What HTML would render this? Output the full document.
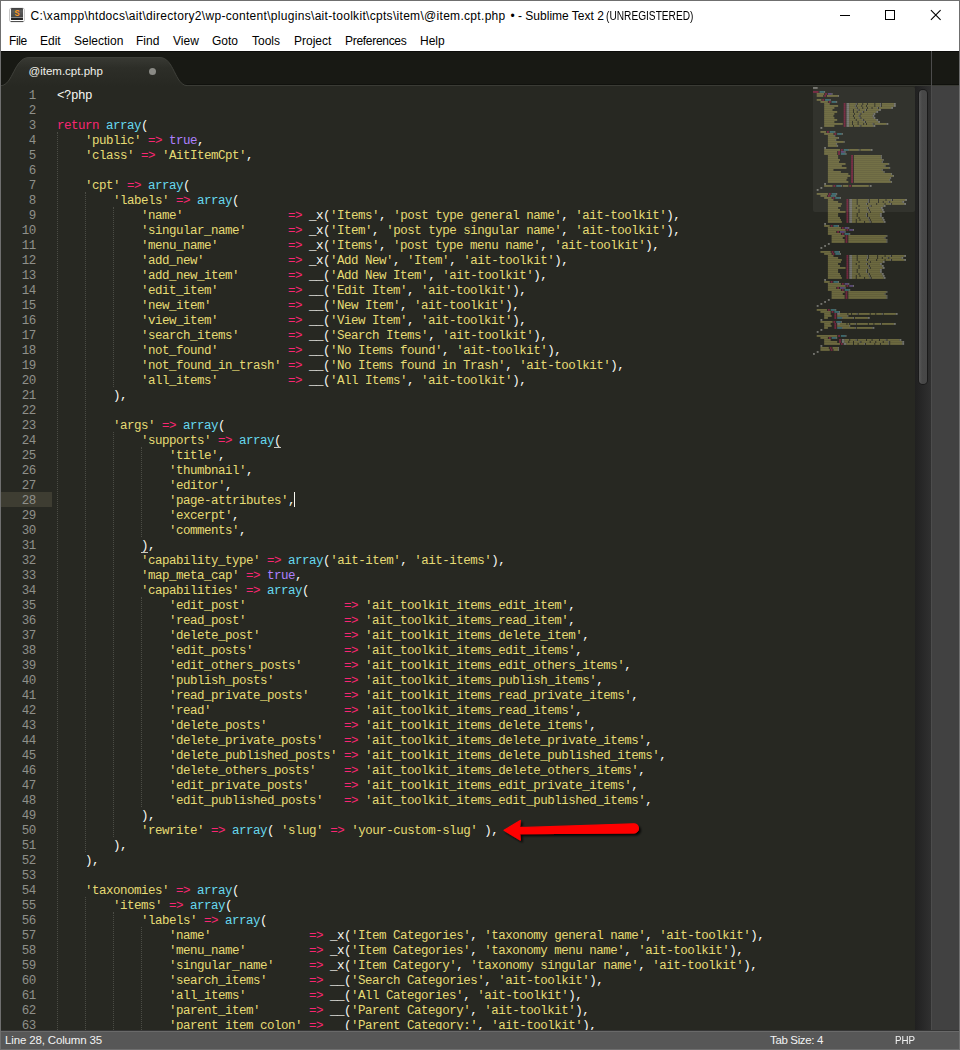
<!DOCTYPE html>
<html lang="en">
<head>
<meta charset="utf-8">
<title>@item.cpt.php - Sublime Text 2</title>
<style>
html,body{margin:0;padding:0;background:#272822;}
body{width:960px;height:1050px;overflow:hidden;position:relative;font-family:"Liberation Sans",sans-serif;}
#win{position:absolute;left:0;top:0;width:960px;height:1050px;overflow:hidden;background:#272822;}
.abs{position:absolute;}
#titlebar{left:1px;top:1px;width:958px;height:29px;background:#fff;}
#title{left:30px;top:9px;font-size:12px;line-height:15px;color:#000;white-space:pre;letter-spacing:0;}
#title span{position:absolute;top:0;white-space:pre}#ta{left:0.6px;letter-spacing:0.305px}#tb{left:480.5px}#tc{left:575.6px;transform:scaleX(0.846);transform-origin:0 0}
#menubar{left:1px;top:30px;width:958px;height:21px;background:#fff;}
#menubar span{position:absolute;top:4px;font-size:12px;line-height:15px;color:#000;white-space:nowrap;}
#tabbar{left:1px;top:51px;width:958px;height:35px;background:#181914;}
#editor{left:1px;top:86px;width:914px;height:945px;background:#272822;}
#nums{left:0;top:89px;width:35.75px;text-align:right;color:#8F908A;font-family:"Liberation Mono",monospace;font-size:12.5px;letter-spacing:-0.5px;line-height:15px;}
#nums div{height:15px;}
#code{left:57px;top:89px;color:#F8F8F2;font-family:"Liberation Mono",monospace;font-size:12.5px;letter-spacing:-0.5px;line-height:15px;}
.ln{height:15px;white-space:pre;}
.k{color:#F92672}.f{color:#66D9EF}.s{color:#E6DB74}.c{color:#AE81FF}
.g{position:absolute;width:0;border-left:1px dotted #4b4c45;display:block;}
#gut-hl{left:1px;top:492px;width:51px;height:15px;background:#3E3D32;}
#caret{left:294px;top:492px;width:1px;height:15px;background:#F8F8F0;}
.ul{height:1px;background:#c8c8c0;}
#track{left:915px;top:86px;width:16px;height:945px;background:linear-gradient(90deg,#202020,#303030);}
#thumb{left:919px;top:90px;width:8px;height:294px;border-radius:5px;background:linear-gradient(90deg,#585858,#484848 40%,#474747);box-shadow:0 0 0 1px #1a1a1a;}
#divider{left:931px;top:51px;width:1px;height:980px;background:#4c4c4c;}
#pane2{left:932px;top:86px;width:27px;height:945px;background:#414141;}
#mmview{left:813px;top:87px;width:102px;height:125px;background:#32332d;border-radius:2px;}
#status{left:1px;top:1030px;width:958px;height:19px;background:#575757;border-top:1px solid #353535;box-sizing:border-box;}
#status:before{content:"";position:absolute;left:0;top:0;width:100%;height:1px;background:#696969;}
#status span{position:absolute;top:2px;font-size:11.5px;line-height:15px;color:#f2f2f2;white-space:nowrap;}
.bd{background:#6f6f6f;}
</style>
</head>
<body>
<div id="win">
  <div id="titlebar" class="abs"></div>
  <svg class="abs" style="left:9px;top:7px" width="16" height="16" viewBox="0 0 16 16">
    <defs><linearGradient id="ig" x1="0" y1="0" x2="0" y2="1"><stop offset="0" stop-color="#3c3c3c"/><stop offset="0.25" stop-color="#5c5c5c"/><stop offset="1" stop-color="#3a3a3a"/></linearGradient></defs>
    <rect x="0.6" y="1.2" width="14.8" height="13.6" rx="1.6" fill="#fff" stroke="#a8a8a8" stroke-width="0.7"/>
    <rect x="1.6" y="14" width="12.8" height="1" rx="0.5" fill="#505050"/>
    <rect x="2" y="1" width="12" height="11.9" rx="0.8" fill="url(#ig)"/>
    <rect x="2" y="10.1" width="12" height="1" fill="#8e8e8e"/>
    <rect x="2" y="11.1" width="12" height="1.8" rx="0.4" fill="#222"/>
    <text x="0" y="9" transform="translate(8.1 0) scale(0.82 1)" font-family="Liberation Sans, sans-serif" font-weight="bold" font-size="9.4" text-anchor="middle" fill="#ff9a1e">S</text>
  </svg>
  <div id="title" class="abs"><span id="ta">C:\xampp\htdocs\ait\directory2\wp-content\plugins\ait-toolkit\cpts\item\@item.cpt.php</span><span id="tb">• - Sublime Text 2</span><span id="tc">(UNREGISTERED)</span></div>
  <svg class="abs" style="left:830px;top:1px" width="129" height="29" viewBox="0 0 129 29">
    <path d="M10 14.5H20" stroke="#000" stroke-width="1" fill="none"/>
    <rect x="55.5" y="9.5" width="9" height="9" stroke="#000" stroke-width="1" fill="none"/>
    <path d="M100.9 9.2L110.6 18.9M110.6 9.2L100.9 18.9" stroke="#000" stroke-width="1.1" fill="none"/>
  </svg>
  <div id="menubar" class="abs">
    <span style="left:8px;letter-spacing:-0.4px">File</span><span style="left:39px">Edit</span><span style="left:73px">Selection</span><span style="left:135px">Find</span><span style="left:172px">View</span><span style="left:211px">Goto</span><span style="left:251px">Tools</span><span style="left:293px">Project</span><span style="left:344px;letter-spacing:-0.3px">Preferences</span><span style="left:419px">Help</span>
  </div>
  <div id="tabbar" class="abs"></div>
  <svg class="abs" style="left:0;top:51px" width="960" height="36" viewBox="0 0 960 36">
    <defs><linearGradient id="tg" x1="0" y1="0" x2="0" y2="1"><stop offset="0" stop-color="#383933"/><stop offset="0.35" stop-color="#2d2e28"/><stop offset="1" stop-color="#272822"/></linearGradient></defs>
    <rect x="1" y="0" width="958" height="1" fill="#0c0c0a"/>
    <rect x="1" y="33" width="958" height="1" fill="#10110d"/>
    <rect x="1" y="34" width="958" height="1" fill="#3a3b35"/><rect x="1" y="35" width="958" height="1" fill="#272822"/>
    <path d="M1 34.5 C13 34.5 14 6.5 29 6.5 L160 6.5 C174 6.5 175 34.5 187 34.5 L186 36 L1 36 Z" fill="url(#tg)" stroke="#3f403a" stroke-width="1"/>
    <rect x="1" y="35" width="190" height="1" fill="#272822"/>
    <circle cx="152.5" cy="20.5" r="3.5" fill="#8a8a85"/>
    <text x="28.5" y="23.6" font-family="Liberation Sans, sans-serif" font-size="11.5" fill="#f0f0ea">@item.cpt.php</text>
  </svg>
  <div id="editor" class="abs"></div>
  <div id="gut-hl" class="abs"></div>
  <i class="g" style="left:57px;top:132px;height:900px"></i>
<i class="g" style="left:85px;top:192px;height:660px"></i>
<i class="g" style="left:85px;top:897px;height:135px"></i>
<i class="g" style="left:113px;top:207px;height:180px"></i>
<i class="g" style="left:113px;top:432px;height:405px"></i>
<i class="g" style="left:113px;top:912px;height:120px"></i>
<i class="g" style="left:141px;top:447px;height:90px"></i>
<i class="g" style="left:141px;top:597px;height:210px"></i>
<i class="g" style="left:141px;top:927px;height:105px"></i>
  <div id="nums" class="abs">
<div>1</div>
<div>2</div>
<div>3</div>
<div>4</div>
<div>5</div>
<div>6</div>
<div>7</div>
<div>8</div>
<div>9</div>
<div>10</div>
<div>11</div>
<div>12</div>
<div>13</div>
<div>14</div>
<div>15</div>
<div>16</div>
<div>17</div>
<div>18</div>
<div>19</div>
<div>20</div>
<div>21</div>
<div>22</div>
<div>23</div>
<div>24</div>
<div>25</div>
<div>26</div>
<div>27</div>
<div>28</div>
<div>29</div>
<div>30</div>
<div>31</div>
<div>32</div>
<div>33</div>
<div>34</div>
<div>35</div>
<div>36</div>
<div>37</div>
<div>38</div>
<div>39</div>
<div>40</div>
<div>41</div>
<div>42</div>
<div>43</div>
<div>44</div>
<div>45</div>
<div>46</div>
<div>47</div>
<div>48</div>
<div>49</div>
<div>50</div>
<div>51</div>
<div>52</div>
<div>53</div>
<div>54</div>
<div>55</div>
<div>56</div>
<div>57</div>
<div>58</div>
<div>59</div>
<div>60</div>
<div>61</div>
<div>62</div>
<div>63</div>
  </div>
  <div id="code" class="abs">
<div class="ln">&lt;?php</div>
<div class="ln"></div>
<div class="ln"><span class="k">return</span> <span class="f">array</span>(</div>
<div class="ln">    <span class="s">&#x27;public&#x27;</span> <span class="k">=&gt;</span> <span class="c">true</span>,</div>
<div class="ln">    <span class="s">&#x27;class&#x27;</span> <span class="k">=&gt;</span> <span class="s">&#x27;AitItemCpt&#x27;</span>,</div>
<div class="ln"></div>
<div class="ln">    <span class="s">&#x27;cpt&#x27;</span> <span class="k">=&gt;</span> <span class="f">array</span>(</div>
<div class="ln">        <span class="s">&#x27;labels&#x27;</span> <span class="k">=&gt;</span> <span class="f">array</span>(</div>
<div class="ln">            <span class="s">&#x27;name&#x27;</span>               <span class="k">=&gt;</span> _x(<span class="s">&#x27;Items&#x27;</span>, <span class="s">&#x27;post type general name&#x27;</span>, <span class="s">&#x27;ait-toolkit&#x27;</span>),</div>
<div class="ln">            <span class="s">&#x27;singular_name&#x27;</span>      <span class="k">=&gt;</span> _x(<span class="s">&#x27;Item&#x27;</span>, <span class="s">&#x27;post type singular name&#x27;</span>, <span class="s">&#x27;ait-toolkit&#x27;</span>),</div>
<div class="ln">            <span class="s">&#x27;menu_name&#x27;</span>          <span class="k">=&gt;</span> _x(<span class="s">&#x27;Items&#x27;</span>, <span class="s">&#x27;post type menu name&#x27;</span>, <span class="s">&#x27;ait-toolkit&#x27;</span>),</div>
<div class="ln">            <span class="s">&#x27;add_new&#x27;</span>            <span class="k">=&gt;</span> _x(<span class="s">&#x27;Add New&#x27;</span>, <span class="s">&#x27;Item&#x27;</span>, <span class="s">&#x27;ait-toolkit&#x27;</span>),</div>
<div class="ln">            <span class="s">&#x27;add_new_item&#x27;</span>       <span class="k">=&gt;</span> __(<span class="s">&#x27;Add New Item&#x27;</span>, <span class="s">&#x27;ait-toolkit&#x27;</span>),</div>
<div class="ln">            <span class="s">&#x27;edit_item&#x27;</span>          <span class="k">=&gt;</span> __(<span class="s">&#x27;Edit Item&#x27;</span>, <span class="s">&#x27;ait-toolkit&#x27;</span>),</div>
<div class="ln">            <span class="s">&#x27;new_item&#x27;</span>           <span class="k">=&gt;</span> __(<span class="s">&#x27;New Item&#x27;</span>, <span class="s">&#x27;ait-toolkit&#x27;</span>),</div>
<div class="ln">            <span class="s">&#x27;view_item&#x27;</span>          <span class="k">=&gt;</span> __(<span class="s">&#x27;View Item&#x27;</span>, <span class="s">&#x27;ait-toolkit&#x27;</span>),</div>
<div class="ln">            <span class="s">&#x27;search_items&#x27;</span>       <span class="k">=&gt;</span> __(<span class="s">&#x27;Search Items&#x27;</span>, <span class="s">&#x27;ait-toolkit&#x27;</span>),</div>
<div class="ln">            <span class="s">&#x27;not_found&#x27;</span>          <span class="k">=&gt;</span> __(<span class="s">&#x27;No Items found&#x27;</span>, <span class="s">&#x27;ait-toolkit&#x27;</span>),</div>
<div class="ln">            <span class="s">&#x27;not_found_in_trash&#x27;</span> <span class="k">=&gt;</span> __(<span class="s">&#x27;No Items found in Trash&#x27;</span>, <span class="s">&#x27;ait-toolkit&#x27;</span>),</div>
<div class="ln">            <span class="s">&#x27;all_items&#x27;</span>          <span class="k">=&gt;</span> __(<span class="s">&#x27;All Items&#x27;</span>, <span class="s">&#x27;ait-toolkit&#x27;</span>),</div>
<div class="ln">        ),</div>
<div class="ln"></div>
<div class="ln">        <span class="s">&#x27;args&#x27;</span> <span class="k">=&gt;</span> <span class="f">array</span>(</div>
<div class="ln">            <span class="s">&#x27;supports&#x27;</span> <span class="k">=&gt;</span> <span class="f">array</span>(</div>
<div class="ln">                <span class="s">&#x27;title&#x27;</span>,</div>
<div class="ln">                <span class="s">&#x27;thumbnail&#x27;</span>,</div>
<div class="ln">                <span class="s">&#x27;editor&#x27;</span>,</div>
<div class="ln">                <span class="s">&#x27;page-attributes&#x27;</span>,</div>
<div class="ln">                <span class="s">&#x27;excerpt&#x27;</span>,</div>
<div class="ln">                <span class="s">&#x27;comments&#x27;</span>,</div>
<div class="ln">            ),</div>
<div class="ln">            <span class="s">&#x27;capability_type&#x27;</span> <span class="k">=&gt;</span> <span class="f">array</span>(<span class="s">&#x27;ait-item&#x27;</span>, <span class="s">&#x27;ait-items&#x27;</span>),</div>
<div class="ln">            <span class="s">&#x27;map_meta_cap&#x27;</span> <span class="k">=&gt;</span> <span class="c">true</span>,</div>
<div class="ln">            <span class="s">&#x27;capabilities&#x27;</span> <span class="k">=&gt;</span> <span class="f">array</span>(</div>
<div class="ln">                <span class="s">&#x27;edit_post&#x27;</span>              <span class="k">=&gt;</span> <span class="s">&#x27;ait_toolkit_items_edit_item&#x27;</span>,</div>
<div class="ln">                <span class="s">&#x27;read_post&#x27;</span>              <span class="k">=&gt;</span> <span class="s">&#x27;ait_toolkit_items_read_item&#x27;</span>,</div>
<div class="ln">                <span class="s">&#x27;delete_post&#x27;</span>            <span class="k">=&gt;</span> <span class="s">&#x27;ait_toolkit_items_delete_item&#x27;</span>,</div>
<div class="ln">                <span class="s">&#x27;edit_posts&#x27;</span>             <span class="k">=&gt;</span> <span class="s">&#x27;ait_toolkit_items_edit_items&#x27;</span>,</div>
<div class="ln">                <span class="s">&#x27;edit_others_posts&#x27;</span>      <span class="k">=&gt;</span> <span class="s">&#x27;ait_toolkit_items_edit_others_items&#x27;</span>,</div>
<div class="ln">                <span class="s">&#x27;publish_posts&#x27;</span>          <span class="k">=&gt;</span> <span class="s">&#x27;ait_toolkit_items_publish_items&#x27;</span>,</div>
<div class="ln">                <span class="s">&#x27;read_private_posts&#x27;</span>     <span class="k">=&gt;</span> <span class="s">&#x27;ait_toolkit_items_read_private_items&#x27;</span>,</div>
<div class="ln">                <span class="s">&#x27;read&#x27;</span>                   <span class="k">=&gt;</span> <span class="s">&#x27;ait_toolkit_items_read_items&#x27;</span>,</div>
<div class="ln">                <span class="s">&#x27;delete_posts&#x27;</span>           <span class="k">=&gt;</span> <span class="s">&#x27;ait_toolkit_items_delete_items&#x27;</span>,</div>
<div class="ln">                <span class="s">&#x27;delete_private_posts&#x27;</span>   <span class="k">=&gt;</span> <span class="s">&#x27;ait_toolkit_items_delete_private_items&#x27;</span>,</div>
<div class="ln">                <span class="s">&#x27;delete_published_posts&#x27;</span> <span class="k">=&gt;</span> <span class="s">&#x27;ait_toolkit_items_delete_published_items&#x27;</span>,</div>
<div class="ln">                <span class="s">&#x27;delete_others_posts&#x27;</span>    <span class="k">=&gt;</span> <span class="s">&#x27;ait_toolkit_items_delete_others_items&#x27;</span>,</div>
<div class="ln">                <span class="s">&#x27;edit_private_posts&#x27;</span>     <span class="k">=&gt;</span> <span class="s">&#x27;ait_toolkit_items_edit_private_items&#x27;</span>,</div>
<div class="ln">                <span class="s">&#x27;edit_published_posts&#x27;</span>   <span class="k">=&gt;</span> <span class="s">&#x27;ait_toolkit_items_edit_published_items&#x27;</span>,</div>
<div class="ln">            ),</div>
<div class="ln">            <span class="s">&#x27;rewrite&#x27;</span> <span class="k">=&gt;</span> <span class="f">array</span>( <span class="s">&#x27;slug&#x27;</span> <span class="k">=&gt;</span> <span class="s">&#x27;your-custom-slug&#x27;</span> ),</div>
<div class="ln">        ),</div>
<div class="ln">    ),</div>
<div class="ln"></div>
<div class="ln">    <span class="s">&#x27;taxonomies&#x27;</span> <span class="k">=&gt;</span> <span class="f">array</span>(</div>
<div class="ln">        <span class="s">&#x27;items&#x27;</span> <span class="k">=&gt;</span> <span class="f">array</span>(</div>
<div class="ln">            <span class="s">&#x27;labels&#x27;</span> <span class="k">=&gt;</span> <span class="f">array</span>(</div>
<div class="ln">                <span class="s">&#x27;name&#x27;</span>              <span class="k">=&gt;</span> _x(<span class="s">&#x27;Item Categories&#x27;</span>, <span class="s">&#x27;taxonomy general name&#x27;</span>, <span class="s">&#x27;ait-toolkit&#x27;</span>),</div>
<div class="ln">                <span class="s">&#x27;menu_name&#x27;</span>         <span class="k">=&gt;</span> _x(<span class="s">&#x27;Item Categories&#x27;</span>, <span class="s">&#x27;taxonomy menu name&#x27;</span>, <span class="s">&#x27;ait-toolkit&#x27;</span>),</div>
<div class="ln">                <span class="s">&#x27;singular_name&#x27;</span>     <span class="k">=&gt;</span> _x(<span class="s">&#x27;Item Category&#x27;</span>, <span class="s">&#x27;taxonomy singular name&#x27;</span>, <span class="s">&#x27;ait-toolkit&#x27;</span>),</div>
<div class="ln">                <span class="s">&#x27;search_items&#x27;</span>      <span class="k">=&gt;</span> __(<span class="s">&#x27;Search Categories&#x27;</span>, <span class="s">&#x27;ait-toolkit&#x27;</span>),</div>
<div class="ln">                <span class="s">&#x27;all_items&#x27;</span>         <span class="k">=&gt;</span> __(<span class="s">&#x27;All Categories&#x27;</span>, <span class="s">&#x27;ait-toolkit&#x27;</span>),</div>
<div class="ln">                <span class="s">&#x27;parent_item&#x27;</span>       <span class="k">=&gt;</span> __(<span class="s">&#x27;Parent Category&#x27;</span>, <span class="s">&#x27;ait-toolkit&#x27;</span>),</div>
<div class="ln">                <span class="s">&#x27;parent_item_colon&#x27;</span> <span class="k">=&gt;</span> __(<span class="s">&#x27;Parent Category:&#x27;</span>, <span class="s">&#x27;ait-toolkit&#x27;</span>),</div>
  </div>
  <div id="caret" class="abs"></div>
  <div class="abs ul" style="left:274px;top:447px;width:7px"></div>
  <div class="abs ul" style="left:141px;top:552px;width:7px"></div>
  <div id="mmview" class="abs"></div>
  <svg class="abs" style="left:0;top:0;opacity:.45" width="960" height="400" viewBox="0 0 960 400" shape-rendering="auto">
<rect x="813.00" y="87.2" width="4.65" height="1.5" fill="#F8F8F2"/>
<rect x="813.00" y="91.2" width="5.58" height="1.5" fill="#F92672"/>
<rect x="819.51" y="91.2" width="4.65" height="1.5" fill="#66D9EF"/>
<rect x="824.16" y="91.2" width="0.93" height="1.5" fill="#F8F8F2"/>
<rect x="816.72" y="93.2" width="7.44" height="1.5" fill="#E6DB74"/>
<rect x="825.09" y="93.2" width="1.86" height="1.5" fill="#F92672"/>
<rect x="827.88" y="93.2" width="3.72" height="1.5" fill="#AE81FF"/>
<rect x="831.60" y="93.2" width="0.93" height="1.5" fill="#F8F8F2"/>
<rect x="816.72" y="95.2" width="6.51" height="1.5" fill="#E6DB74"/>
<rect x="824.16" y="95.2" width="1.86" height="1.5" fill="#F92672"/>
<rect x="826.95" y="95.2" width="11.16" height="1.5" fill="#E6DB74"/>
<rect x="838.11" y="95.2" width="0.93" height="1.5" fill="#F8F8F2"/>
<rect x="816.72" y="99.2" width="4.65" height="1.5" fill="#E6DB74"/>
<rect x="822.30" y="99.2" width="1.86" height="1.5" fill="#F92672"/>
<rect x="825.09" y="99.2" width="4.65" height="1.5" fill="#66D9EF"/>
<rect x="829.74" y="99.2" width="0.93" height="1.5" fill="#F8F8F2"/>
<rect x="820.44" y="101.2" width="7.44" height="1.5" fill="#E6DB74"/>
<rect x="828.81" y="101.2" width="1.86" height="1.5" fill="#F92672"/>
<rect x="831.60" y="101.2" width="4.65" height="1.5" fill="#66D9EF"/>
<rect x="836.25" y="101.2" width="0.93" height="1.5" fill="#F8F8F2"/>
<rect x="824.16" y="103.2" width="5.58" height="1.5" fill="#E6DB74"/>
<rect x="843.69" y="103.2" width="1.86" height="1.5" fill="#F92672"/>
<rect x="846.48" y="103.2" width="2.79" height="1.5" fill="#F8F8F2"/>
<rect x="849.27" y="103.2" width="6.51" height="1.5" fill="#E6DB74"/>
<rect x="855.78" y="103.2" width="0.93" height="1.5" fill="#F8F8F2"/>
<rect x="857.64" y="103.2" width="4.65" height="1.5" fill="#E6DB74"/>
<rect x="863.22" y="103.2" width="3.72" height="1.5" fill="#E6DB74"/>
<rect x="867.87" y="103.2" width="6.51" height="1.5" fill="#E6DB74"/>
<rect x="875.31" y="103.2" width="4.65" height="1.5" fill="#E6DB74"/>
<rect x="879.96" y="103.2" width="0.93" height="1.5" fill="#F8F8F2"/>
<rect x="881.82" y="103.2" width="12.09" height="1.5" fill="#E6DB74"/>
<rect x="893.91" y="103.2" width="1.86" height="1.5" fill="#F8F8F2"/>
<rect x="824.16" y="105.2" width="13.95" height="1.5" fill="#E6DB74"/>
<rect x="843.69" y="105.2" width="1.86" height="1.5" fill="#F92672"/>
<rect x="846.48" y="105.2" width="2.79" height="1.5" fill="#F8F8F2"/>
<rect x="849.27" y="105.2" width="5.58" height="1.5" fill="#E6DB74"/>
<rect x="854.85" y="105.2" width="0.93" height="1.5" fill="#F8F8F2"/>
<rect x="856.71" y="105.2" width="4.65" height="1.5" fill="#E6DB74"/>
<rect x="862.29" y="105.2" width="3.72" height="1.5" fill="#E6DB74"/>
<rect x="866.94" y="105.2" width="7.44" height="1.5" fill="#E6DB74"/>
<rect x="875.31" y="105.2" width="4.65" height="1.5" fill="#E6DB74"/>
<rect x="879.96" y="105.2" width="0.93" height="1.5" fill="#F8F8F2"/>
<rect x="881.82" y="105.2" width="12.09" height="1.5" fill="#E6DB74"/>
<rect x="893.91" y="105.2" width="1.86" height="1.5" fill="#F8F8F2"/>
<rect x="824.16" y="107.2" width="10.23" height="1.5" fill="#E6DB74"/>
<rect x="843.69" y="107.2" width="1.86" height="1.5" fill="#F92672"/>
<rect x="846.48" y="107.2" width="2.79" height="1.5" fill="#F8F8F2"/>
<rect x="849.27" y="107.2" width="6.51" height="1.5" fill="#E6DB74"/>
<rect x="855.78" y="107.2" width="0.93" height="1.5" fill="#F8F8F2"/>
<rect x="857.64" y="107.2" width="4.65" height="1.5" fill="#E6DB74"/>
<rect x="863.22" y="107.2" width="3.72" height="1.5" fill="#E6DB74"/>
<rect x="867.87" y="107.2" width="3.72" height="1.5" fill="#E6DB74"/>
<rect x="872.52" y="107.2" width="4.65" height="1.5" fill="#E6DB74"/>
<rect x="877.17" y="107.2" width="0.93" height="1.5" fill="#F8F8F2"/>
<rect x="879.03" y="107.2" width="12.09" height="1.5" fill="#E6DB74"/>
<rect x="891.12" y="107.2" width="1.86" height="1.5" fill="#F8F8F2"/>
<rect x="824.16" y="109.2" width="8.37" height="1.5" fill="#E6DB74"/>
<rect x="843.69" y="109.2" width="1.86" height="1.5" fill="#F92672"/>
<rect x="846.48" y="109.2" width="2.79" height="1.5" fill="#F8F8F2"/>
<rect x="849.27" y="109.2" width="3.72" height="1.5" fill="#E6DB74"/>
<rect x="853.92" y="109.2" width="3.72" height="1.5" fill="#E6DB74"/>
<rect x="857.64" y="109.2" width="0.93" height="1.5" fill="#F8F8F2"/>
<rect x="859.50" y="109.2" width="5.58" height="1.5" fill="#E6DB74"/>
<rect x="865.08" y="109.2" width="0.93" height="1.5" fill="#F8F8F2"/>
<rect x="866.94" y="109.2" width="12.09" height="1.5" fill="#E6DB74"/>
<rect x="879.03" y="109.2" width="1.86" height="1.5" fill="#F8F8F2"/>
<rect x="824.16" y="111.2" width="13.02" height="1.5" fill="#E6DB74"/>
<rect x="843.69" y="111.2" width="1.86" height="1.5" fill="#F92672"/>
<rect x="846.48" y="111.2" width="2.79" height="1.5" fill="#F8F8F2"/>
<rect x="849.27" y="111.2" width="3.72" height="1.5" fill="#E6DB74"/>
<rect x="853.92" y="111.2" width="2.79" height="1.5" fill="#E6DB74"/>
<rect x="857.64" y="111.2" width="4.65" height="1.5" fill="#E6DB74"/>
<rect x="862.29" y="111.2" width="0.93" height="1.5" fill="#F8F8F2"/>
<rect x="864.15" y="111.2" width="12.09" height="1.5" fill="#E6DB74"/>
<rect x="876.24" y="111.2" width="1.86" height="1.5" fill="#F8F8F2"/>
<rect x="824.16" y="113.2" width="10.23" height="1.5" fill="#E6DB74"/>
<rect x="843.69" y="113.2" width="1.86" height="1.5" fill="#F92672"/>
<rect x="846.48" y="113.2" width="2.79" height="1.5" fill="#F8F8F2"/>
<rect x="849.27" y="113.2" width="4.65" height="1.5" fill="#E6DB74"/>
<rect x="854.85" y="113.2" width="4.65" height="1.5" fill="#E6DB74"/>
<rect x="859.50" y="113.2" width="0.93" height="1.5" fill="#F8F8F2"/>
<rect x="861.36" y="113.2" width="12.09" height="1.5" fill="#E6DB74"/>
<rect x="873.45" y="113.2" width="1.86" height="1.5" fill="#F8F8F2"/>
<rect x="824.16" y="115.2" width="9.30" height="1.5" fill="#E6DB74"/>
<rect x="843.69" y="115.2" width="1.86" height="1.5" fill="#F92672"/>
<rect x="846.48" y="115.2" width="2.79" height="1.5" fill="#F8F8F2"/>
<rect x="849.27" y="115.2" width="3.72" height="1.5" fill="#E6DB74"/>
<rect x="853.92" y="115.2" width="4.65" height="1.5" fill="#E6DB74"/>
<rect x="858.57" y="115.2" width="0.93" height="1.5" fill="#F8F8F2"/>
<rect x="860.43" y="115.2" width="12.09" height="1.5" fill="#E6DB74"/>
<rect x="872.52" y="115.2" width="1.86" height="1.5" fill="#F8F8F2"/>
<rect x="824.16" y="117.2" width="10.23" height="1.5" fill="#E6DB74"/>
<rect x="843.69" y="117.2" width="1.86" height="1.5" fill="#F92672"/>
<rect x="846.48" y="117.2" width="2.79" height="1.5" fill="#F8F8F2"/>
<rect x="849.27" y="117.2" width="4.65" height="1.5" fill="#E6DB74"/>
<rect x="854.85" y="117.2" width="4.65" height="1.5" fill="#E6DB74"/>
<rect x="859.50" y="117.2" width="0.93" height="1.5" fill="#F8F8F2"/>
<rect x="861.36" y="117.2" width="12.09" height="1.5" fill="#E6DB74"/>
<rect x="873.45" y="117.2" width="1.86" height="1.5" fill="#F8F8F2"/>
<rect x="824.16" y="119.2" width="13.02" height="1.5" fill="#E6DB74"/>
<rect x="843.69" y="119.2" width="1.86" height="1.5" fill="#F92672"/>
<rect x="846.48" y="119.2" width="2.79" height="1.5" fill="#F8F8F2"/>
<rect x="849.27" y="119.2" width="6.51" height="1.5" fill="#E6DB74"/>
<rect x="856.71" y="119.2" width="5.58" height="1.5" fill="#E6DB74"/>
<rect x="862.29" y="119.2" width="0.93" height="1.5" fill="#F8F8F2"/>
<rect x="864.15" y="119.2" width="12.09" height="1.5" fill="#E6DB74"/>
<rect x="876.24" y="119.2" width="1.86" height="1.5" fill="#F8F8F2"/>
<rect x="824.16" y="121.2" width="10.23" height="1.5" fill="#E6DB74"/>
<rect x="843.69" y="121.2" width="1.86" height="1.5" fill="#F92672"/>
<rect x="846.48" y="121.2" width="2.79" height="1.5" fill="#F8F8F2"/>
<rect x="849.27" y="121.2" width="2.79" height="1.5" fill="#E6DB74"/>
<rect x="852.99" y="121.2" width="4.65" height="1.5" fill="#E6DB74"/>
<rect x="858.57" y="121.2" width="5.58" height="1.5" fill="#E6DB74"/>
<rect x="864.15" y="121.2" width="0.93" height="1.5" fill="#F8F8F2"/>
<rect x="866.01" y="121.2" width="12.09" height="1.5" fill="#E6DB74"/>
<rect x="878.10" y="121.2" width="1.86" height="1.5" fill="#F8F8F2"/>
<rect x="824.16" y="123.2" width="18.60" height="1.5" fill="#E6DB74"/>
<rect x="843.69" y="123.2" width="1.86" height="1.5" fill="#F92672"/>
<rect x="846.48" y="123.2" width="2.79" height="1.5" fill="#F8F8F2"/>
<rect x="849.27" y="123.2" width="2.79" height="1.5" fill="#E6DB74"/>
<rect x="852.99" y="123.2" width="4.65" height="1.5" fill="#E6DB74"/>
<rect x="858.57" y="123.2" width="4.65" height="1.5" fill="#E6DB74"/>
<rect x="864.15" y="123.2" width="1.86" height="1.5" fill="#E6DB74"/>
<rect x="866.94" y="123.2" width="5.58" height="1.5" fill="#E6DB74"/>
<rect x="872.52" y="123.2" width="0.93" height="1.5" fill="#F8F8F2"/>
<rect x="874.38" y="123.2" width="12.09" height="1.5" fill="#E6DB74"/>
<rect x="886.47" y="123.2" width="1.86" height="1.5" fill="#F8F8F2"/>
<rect x="824.16" y="125.2" width="10.23" height="1.5" fill="#E6DB74"/>
<rect x="843.69" y="125.2" width="1.86" height="1.5" fill="#F92672"/>
<rect x="846.48" y="125.2" width="2.79" height="1.5" fill="#F8F8F2"/>
<rect x="849.27" y="125.2" width="3.72" height="1.5" fill="#E6DB74"/>
<rect x="853.92" y="125.2" width="5.58" height="1.5" fill="#E6DB74"/>
<rect x="859.50" y="125.2" width="0.93" height="1.5" fill="#F8F8F2"/>
<rect x="861.36" y="125.2" width="12.09" height="1.5" fill="#E6DB74"/>
<rect x="873.45" y="125.2" width="1.86" height="1.5" fill="#F8F8F2"/>
<rect x="820.44" y="127.2" width="1.86" height="1.5" fill="#F8F8F2"/>
<rect x="820.44" y="131.2" width="5.58" height="1.5" fill="#E6DB74"/>
<rect x="826.95" y="131.2" width="1.86" height="1.5" fill="#F92672"/>
<rect x="829.74" y="131.2" width="4.65" height="1.5" fill="#66D9EF"/>
<rect x="834.39" y="131.2" width="0.93" height="1.5" fill="#F8F8F2"/>
<rect x="824.16" y="133.2" width="9.30" height="1.5" fill="#E6DB74"/>
<rect x="834.39" y="133.2" width="1.86" height="1.5" fill="#F92672"/>
<rect x="837.18" y="133.2" width="4.65" height="1.5" fill="#66D9EF"/>
<rect x="841.83" y="133.2" width="0.93" height="1.5" fill="#F8F8F2"/>
<rect x="827.88" y="135.2" width="6.51" height="1.5" fill="#E6DB74"/>
<rect x="834.39" y="135.2" width="0.93" height="1.5" fill="#F8F8F2"/>
<rect x="827.88" y="137.2" width="10.23" height="1.5" fill="#E6DB74"/>
<rect x="838.11" y="137.2" width="0.93" height="1.5" fill="#F8F8F2"/>
<rect x="827.88" y="139.2" width="7.44" height="1.5" fill="#E6DB74"/>
<rect x="835.32" y="139.2" width="0.93" height="1.5" fill="#F8F8F2"/>
<rect x="827.88" y="141.2" width="15.81" height="1.5" fill="#E6DB74"/>
<rect x="843.69" y="141.2" width="0.93" height="1.5" fill="#F8F8F2"/>
<rect x="827.88" y="143.2" width="8.37" height="1.5" fill="#E6DB74"/>
<rect x="836.25" y="143.2" width="0.93" height="1.5" fill="#F8F8F2"/>
<rect x="827.88" y="145.2" width="9.30" height="1.5" fill="#E6DB74"/>
<rect x="837.18" y="145.2" width="0.93" height="1.5" fill="#F8F8F2"/>
<rect x="824.16" y="147.2" width="1.86" height="1.5" fill="#F8F8F2"/>
<rect x="824.16" y="149.2" width="15.81" height="1.5" fill="#E6DB74"/>
<rect x="840.90" y="149.2" width="1.86" height="1.5" fill="#F92672"/>
<rect x="843.69" y="149.2" width="4.65" height="1.5" fill="#66D9EF"/>
<rect x="848.34" y="149.2" width="0.93" height="1.5" fill="#F8F8F2"/>
<rect x="849.27" y="149.2" width="9.30" height="1.5" fill="#E6DB74"/>
<rect x="858.57" y="149.2" width="0.93" height="1.5" fill="#F8F8F2"/>
<rect x="860.43" y="149.2" width="10.23" height="1.5" fill="#E6DB74"/>
<rect x="870.66" y="149.2" width="1.86" height="1.5" fill="#F8F8F2"/>
<rect x="824.16" y="151.2" width="13.02" height="1.5" fill="#E6DB74"/>
<rect x="838.11" y="151.2" width="1.86" height="1.5" fill="#F92672"/>
<rect x="840.90" y="151.2" width="3.72" height="1.5" fill="#AE81FF"/>
<rect x="844.62" y="151.2" width="0.93" height="1.5" fill="#F8F8F2"/>
<rect x="824.16" y="153.2" width="13.02" height="1.5" fill="#E6DB74"/>
<rect x="838.11" y="153.2" width="1.86" height="1.5" fill="#F92672"/>
<rect x="840.90" y="153.2" width="4.65" height="1.5" fill="#66D9EF"/>
<rect x="845.55" y="153.2" width="0.93" height="1.5" fill="#F8F8F2"/>
<rect x="827.88" y="155.2" width="10.23" height="1.5" fill="#E6DB74"/>
<rect x="851.13" y="155.2" width="1.86" height="1.5" fill="#F92672"/>
<rect x="853.92" y="155.2" width="26.97" height="1.5" fill="#E6DB74"/>
<rect x="880.89" y="155.2" width="0.93" height="1.5" fill="#F8F8F2"/>
<rect x="827.88" y="157.2" width="10.23" height="1.5" fill="#E6DB74"/>
<rect x="851.13" y="157.2" width="1.86" height="1.5" fill="#F92672"/>
<rect x="853.92" y="157.2" width="26.97" height="1.5" fill="#E6DB74"/>
<rect x="880.89" y="157.2" width="0.93" height="1.5" fill="#F8F8F2"/>
<rect x="827.88" y="159.2" width="12.09" height="1.5" fill="#E6DB74"/>
<rect x="851.13" y="159.2" width="1.86" height="1.5" fill="#F92672"/>
<rect x="853.92" y="159.2" width="28.83" height="1.5" fill="#E6DB74"/>
<rect x="882.75" y="159.2" width="0.93" height="1.5" fill="#F8F8F2"/>
<rect x="827.88" y="161.2" width="11.16" height="1.5" fill="#E6DB74"/>
<rect x="851.13" y="161.2" width="1.86" height="1.5" fill="#F92672"/>
<rect x="853.92" y="161.2" width="27.90" height="1.5" fill="#E6DB74"/>
<rect x="881.82" y="161.2" width="0.93" height="1.5" fill="#F8F8F2"/>
<rect x="827.88" y="163.2" width="17.67" height="1.5" fill="#E6DB74"/>
<rect x="851.13" y="163.2" width="1.86" height="1.5" fill="#F92672"/>
<rect x="853.92" y="163.2" width="34.41" height="1.5" fill="#E6DB74"/>
<rect x="888.33" y="163.2" width="0.93" height="1.5" fill="#F8F8F2"/>
<rect x="827.88" y="165.2" width="13.95" height="1.5" fill="#E6DB74"/>
<rect x="851.13" y="165.2" width="1.86" height="1.5" fill="#F92672"/>
<rect x="853.92" y="165.2" width="30.69" height="1.5" fill="#E6DB74"/>
<rect x="884.61" y="165.2" width="0.93" height="1.5" fill="#F8F8F2"/>
<rect x="827.88" y="167.2" width="18.60" height="1.5" fill="#E6DB74"/>
<rect x="851.13" y="167.2" width="1.86" height="1.5" fill="#F92672"/>
<rect x="853.92" y="167.2" width="35.34" height="1.5" fill="#E6DB74"/>
<rect x="889.26" y="167.2" width="0.93" height="1.5" fill="#F8F8F2"/>
<rect x="827.88" y="169.2" width="5.58" height="1.5" fill="#E6DB74"/>
<rect x="851.13" y="169.2" width="1.86" height="1.5" fill="#F92672"/>
<rect x="853.92" y="169.2" width="27.90" height="1.5" fill="#E6DB74"/>
<rect x="881.82" y="169.2" width="0.93" height="1.5" fill="#F8F8F2"/>
<rect x="827.88" y="171.2" width="13.02" height="1.5" fill="#E6DB74"/>
<rect x="851.13" y="171.2" width="1.86" height="1.5" fill="#F92672"/>
<rect x="853.92" y="171.2" width="29.76" height="1.5" fill="#E6DB74"/>
<rect x="883.68" y="171.2" width="0.93" height="1.5" fill="#F8F8F2"/>
<rect x="827.88" y="173.2" width="20.46" height="1.5" fill="#E6DB74"/>
<rect x="851.13" y="173.2" width="1.86" height="1.5" fill="#F92672"/>
<rect x="853.92" y="173.2" width="37.20" height="1.5" fill="#E6DB74"/>
<rect x="891.12" y="173.2" width="0.93" height="1.5" fill="#F8F8F2"/>
<rect x="827.88" y="175.2" width="22.32" height="1.5" fill="#E6DB74"/>
<rect x="851.13" y="175.2" width="1.86" height="1.5" fill="#F92672"/>
<rect x="853.92" y="175.2" width="39.06" height="1.5" fill="#E6DB74"/>
<rect x="892.98" y="175.2" width="0.93" height="1.5" fill="#F8F8F2"/>
<rect x="827.88" y="177.2" width="19.53" height="1.5" fill="#E6DB74"/>
<rect x="851.13" y="177.2" width="1.86" height="1.5" fill="#F92672"/>
<rect x="853.92" y="177.2" width="36.27" height="1.5" fill="#E6DB74"/>
<rect x="890.19" y="177.2" width="0.93" height="1.5" fill="#F8F8F2"/>
<rect x="827.88" y="179.2" width="18.60" height="1.5" fill="#E6DB74"/>
<rect x="851.13" y="179.2" width="1.86" height="1.5" fill="#F92672"/>
<rect x="853.92" y="179.2" width="35.34" height="1.5" fill="#E6DB74"/>
<rect x="889.26" y="179.2" width="0.93" height="1.5" fill="#F8F8F2"/>
<rect x="827.88" y="181.2" width="20.46" height="1.5" fill="#E6DB74"/>
<rect x="851.13" y="181.2" width="1.86" height="1.5" fill="#F92672"/>
<rect x="853.92" y="181.2" width="37.20" height="1.5" fill="#E6DB74"/>
<rect x="891.12" y="181.2" width="0.93" height="1.5" fill="#F8F8F2"/>
<rect x="824.16" y="183.2" width="1.86" height="1.5" fill="#F8F8F2"/>
<rect x="824.16" y="185.2" width="8.37" height="1.5" fill="#E6DB74"/>
<rect x="833.46" y="185.2" width="1.86" height="1.5" fill="#F92672"/>
<rect x="836.25" y="185.2" width="4.65" height="1.5" fill="#66D9EF"/>
<rect x="840.90" y="185.2" width="0.93" height="1.5" fill="#F8F8F2"/>
<rect x="842.76" y="185.2" width="5.58" height="1.5" fill="#E6DB74"/>
<rect x="849.27" y="185.2" width="1.86" height="1.5" fill="#F92672"/>
<rect x="852.06" y="185.2" width="16.74" height="1.5" fill="#E6DB74"/>
<rect x="869.73" y="185.2" width="1.86" height="1.5" fill="#F8F8F2"/>
<rect x="820.44" y="187.2" width="1.86" height="1.5" fill="#F8F8F2"/>
<rect x="816.72" y="189.2" width="1.86" height="1.5" fill="#F8F8F2"/>
<rect x="816.72" y="193.2" width="11.16" height="1.5" fill="#E6DB74"/>
<rect x="828.81" y="193.2" width="1.86" height="1.5" fill="#F92672"/>
<rect x="831.60" y="193.2" width="4.65" height="1.5" fill="#66D9EF"/>
<rect x="836.25" y="193.2" width="0.93" height="1.5" fill="#F8F8F2"/>
<rect x="820.44" y="195.2" width="6.51" height="1.5" fill="#E6DB74"/>
<rect x="827.88" y="195.2" width="1.86" height="1.5" fill="#F92672"/>
<rect x="830.67" y="195.2" width="4.65" height="1.5" fill="#66D9EF"/>
<rect x="835.32" y="195.2" width="0.93" height="1.5" fill="#F8F8F2"/>
<rect x="824.16" y="197.2" width="7.44" height="1.5" fill="#E6DB74"/>
<rect x="832.53" y="197.2" width="1.86" height="1.5" fill="#F92672"/>
<rect x="835.32" y="197.2" width="4.65" height="1.5" fill="#66D9EF"/>
<rect x="839.97" y="197.2" width="0.93" height="1.5" fill="#F8F8F2"/>
<rect x="827.88" y="199.2" width="5.58" height="1.5" fill="#E6DB74"/>
<rect x="846.48" y="199.2" width="1.86" height="1.5" fill="#F92672"/>
<rect x="849.27" y="199.2" width="2.79" height="1.5" fill="#F8F8F2"/>
<rect x="852.06" y="199.2" width="4.65" height="1.5" fill="#E6DB74"/>
<rect x="857.64" y="199.2" width="10.23" height="1.5" fill="#E6DB74"/>
<rect x="867.87" y="199.2" width="0.93" height="1.5" fill="#F8F8F2"/>
<rect x="869.73" y="199.2" width="8.37" height="1.5" fill="#E6DB74"/>
<rect x="879.03" y="199.2" width="6.51" height="1.5" fill="#E6DB74"/>
<rect x="886.47" y="199.2" width="4.65" height="1.5" fill="#E6DB74"/>
<rect x="891.12" y="199.2" width="0.93" height="1.5" fill="#F8F8F2"/>
<rect x="892.98" y="199.2" width="12.09" height="1.5" fill="#E6DB74"/>
<rect x="905.07" y="199.2" width="1.86" height="1.5" fill="#F8F8F2"/>
<rect x="827.88" y="201.2" width="10.23" height="1.5" fill="#E6DB74"/>
<rect x="846.48" y="201.2" width="1.86" height="1.5" fill="#F92672"/>
<rect x="849.27" y="201.2" width="2.79" height="1.5" fill="#F8F8F2"/>
<rect x="852.06" y="201.2" width="4.65" height="1.5" fill="#E6DB74"/>
<rect x="857.64" y="201.2" width="10.23" height="1.5" fill="#E6DB74"/>
<rect x="867.87" y="201.2" width="0.93" height="1.5" fill="#F8F8F2"/>
<rect x="869.73" y="201.2" width="8.37" height="1.5" fill="#E6DB74"/>
<rect x="879.03" y="201.2" width="3.72" height="1.5" fill="#E6DB74"/>
<rect x="883.68" y="201.2" width="4.65" height="1.5" fill="#E6DB74"/>
<rect x="888.33" y="201.2" width="0.93" height="1.5" fill="#F8F8F2"/>
<rect x="890.19" y="201.2" width="12.09" height="1.5" fill="#E6DB74"/>
<rect x="902.28" y="201.2" width="1.86" height="1.5" fill="#F8F8F2"/>
<rect x="827.88" y="203.2" width="13.95" height="1.5" fill="#E6DB74"/>
<rect x="846.48" y="203.2" width="1.86" height="1.5" fill="#F92672"/>
<rect x="849.27" y="203.2" width="2.79" height="1.5" fill="#F8F8F2"/>
<rect x="852.06" y="203.2" width="4.65" height="1.5" fill="#E6DB74"/>
<rect x="857.64" y="203.2" width="8.37" height="1.5" fill="#E6DB74"/>
<rect x="866.01" y="203.2" width="0.93" height="1.5" fill="#F8F8F2"/>
<rect x="867.87" y="203.2" width="8.37" height="1.5" fill="#E6DB74"/>
<rect x="877.17" y="203.2" width="7.44" height="1.5" fill="#E6DB74"/>
<rect x="885.54" y="203.2" width="4.65" height="1.5" fill="#E6DB74"/>
<rect x="890.19" y="203.2" width="0.93" height="1.5" fill="#F8F8F2"/>
<rect x="892.05" y="203.2" width="12.09" height="1.5" fill="#E6DB74"/>
<rect x="904.14" y="203.2" width="1.86" height="1.5" fill="#F8F8F2"/>
<rect x="827.88" y="205.2" width="13.02" height="1.5" fill="#E6DB74"/>
<rect x="846.48" y="205.2" width="1.86" height="1.5" fill="#F92672"/>
<rect x="849.27" y="205.2" width="2.79" height="1.5" fill="#F8F8F2"/>
<rect x="852.06" y="205.2" width="6.51" height="1.5" fill="#E6DB74"/>
<rect x="859.50" y="205.2" width="10.23" height="1.5" fill="#E6DB74"/>
<rect x="869.73" y="205.2" width="0.93" height="1.5" fill="#F8F8F2"/>
<rect x="871.59" y="205.2" width="12.09" height="1.5" fill="#E6DB74"/>
<rect x="883.68" y="205.2" width="1.86" height="1.5" fill="#F8F8F2"/>
<rect x="827.88" y="207.2" width="10.23" height="1.5" fill="#E6DB74"/>
<rect x="846.48" y="207.2" width="1.86" height="1.5" fill="#F92672"/>
<rect x="849.27" y="207.2" width="2.79" height="1.5" fill="#F8F8F2"/>
<rect x="852.06" y="207.2" width="3.72" height="1.5" fill="#E6DB74"/>
<rect x="856.71" y="207.2" width="10.23" height="1.5" fill="#E6DB74"/>
<rect x="866.94" y="207.2" width="0.93" height="1.5" fill="#F8F8F2"/>
<rect x="868.80" y="207.2" width="12.09" height="1.5" fill="#E6DB74"/>
<rect x="880.89" y="207.2" width="1.86" height="1.5" fill="#F8F8F2"/>
<rect x="827.88" y="209.2" width="12.09" height="1.5" fill="#E6DB74"/>
<rect x="846.48" y="209.2" width="1.86" height="1.5" fill="#F92672"/>
<rect x="849.27" y="209.2" width="2.79" height="1.5" fill="#F8F8F2"/>
<rect x="852.06" y="209.2" width="6.51" height="1.5" fill="#E6DB74"/>
<rect x="859.50" y="209.2" width="8.37" height="1.5" fill="#E6DB74"/>
<rect x="867.87" y="209.2" width="0.93" height="1.5" fill="#F8F8F2"/>
<rect x="869.73" y="209.2" width="12.09" height="1.5" fill="#E6DB74"/>
<rect x="881.82" y="209.2" width="1.86" height="1.5" fill="#F8F8F2"/>
<rect x="827.88" y="211.2" width="17.67" height="1.5" fill="#E6DB74"/>
<rect x="846.48" y="211.2" width="1.86" height="1.5" fill="#F92672"/>
<rect x="849.27" y="211.2" width="2.79" height="1.5" fill="#F8F8F2"/>
<rect x="852.06" y="211.2" width="6.51" height="1.5" fill="#E6DB74"/>
<rect x="859.50" y="211.2" width="9.30" height="1.5" fill="#E6DB74"/>
<rect x="868.80" y="211.2" width="0.93" height="1.5" fill="#F8F8F2"/>
<rect x="870.66" y="211.2" width="12.09" height="1.5" fill="#E6DB74"/>
<rect x="882.75" y="211.2" width="1.86" height="1.5" fill="#F8F8F2"/>
<rect x="827.88" y="213.2" width="10.23" height="1.5" fill="#E6DB74"/>
<rect x="846.48" y="213.2" width="1.86" height="1.5" fill="#F92672"/>
<rect x="849.27" y="213.2" width="2.79" height="1.5" fill="#F8F8F2"/>
<rect x="852.06" y="213.2" width="4.65" height="1.5" fill="#E6DB74"/>
<rect x="857.64" y="213.2" width="8.37" height="1.5" fill="#E6DB74"/>
<rect x="866.01" y="213.2" width="0.93" height="1.5" fill="#F8F8F2"/>
<rect x="867.87" y="213.2" width="12.09" height="1.5" fill="#E6DB74"/>
<rect x="879.96" y="213.2" width="1.86" height="1.5" fill="#F8F8F2"/>
<rect x="827.88" y="215.2" width="10.23" height="1.5" fill="#E6DB74"/>
<rect x="846.48" y="215.2" width="1.86" height="1.5" fill="#F92672"/>
<rect x="849.27" y="215.2" width="2.79" height="1.5" fill="#F8F8F2"/>
<rect x="852.06" y="215.2" width="4.65" height="1.5" fill="#E6DB74"/>
<rect x="857.64" y="215.2" width="8.37" height="1.5" fill="#E6DB74"/>
<rect x="866.01" y="215.2" width="0.93" height="1.5" fill="#F8F8F2"/>
<rect x="867.87" y="215.2" width="12.09" height="1.5" fill="#E6DB74"/>
<rect x="879.96" y="215.2" width="1.86" height="1.5" fill="#F8F8F2"/>
<rect x="827.88" y="217.2" width="12.09" height="1.5" fill="#E6DB74"/>
<rect x="846.48" y="217.2" width="1.86" height="1.5" fill="#F92672"/>
<rect x="849.27" y="217.2" width="2.79" height="1.5" fill="#F8F8F2"/>
<rect x="852.06" y="217.2" width="6.51" height="1.5" fill="#E6DB74"/>
<rect x="859.50" y="217.2" width="8.37" height="1.5" fill="#E6DB74"/>
<rect x="867.87" y="217.2" width="0.93" height="1.5" fill="#F8F8F2"/>
<rect x="869.73" y="217.2" width="12.09" height="1.5" fill="#E6DB74"/>
<rect x="881.82" y="217.2" width="1.86" height="1.5" fill="#F8F8F2"/>
<rect x="827.88" y="219.2" width="13.02" height="1.5" fill="#E6DB74"/>
<rect x="846.48" y="219.2" width="1.86" height="1.5" fill="#F92672"/>
<rect x="849.27" y="219.2" width="2.79" height="1.5" fill="#F8F8F2"/>
<rect x="852.06" y="219.2" width="3.72" height="1.5" fill="#E6DB74"/>
<rect x="856.71" y="219.2" width="2.79" height="1.5" fill="#E6DB74"/>
<rect x="860.43" y="219.2" width="8.37" height="1.5" fill="#E6DB74"/>
<rect x="868.80" y="219.2" width="0.93" height="1.5" fill="#F8F8F2"/>
<rect x="870.66" y="219.2" width="12.09" height="1.5" fill="#E6DB74"/>
<rect x="882.75" y="219.2" width="1.86" height="1.5" fill="#F8F8F2"/>
<rect x="827.88" y="221.2" width="13.95" height="1.5" fill="#E6DB74"/>
<rect x="846.48" y="221.2" width="1.86" height="1.5" fill="#F92672"/>
<rect x="849.27" y="221.2" width="2.79" height="1.5" fill="#F8F8F2"/>
<rect x="852.06" y="221.2" width="3.72" height="1.5" fill="#E6DB74"/>
<rect x="856.71" y="221.2" width="7.44" height="1.5" fill="#E6DB74"/>
<rect x="865.08" y="221.2" width="4.65" height="1.5" fill="#E6DB74"/>
<rect x="869.73" y="221.2" width="0.93" height="1.5" fill="#F8F8F2"/>
<rect x="871.59" y="221.2" width="12.09" height="1.5" fill="#E6DB74"/>
<rect x="883.68" y="221.2" width="1.86" height="1.5" fill="#F8F8F2"/>
<rect x="824.16" y="223.2" width="1.86" height="1.5" fill="#F8F8F2"/>
<rect x="824.16" y="225.2" width="5.58" height="1.5" fill="#E6DB74"/>
<rect x="830.67" y="225.2" width="1.86" height="1.5" fill="#F92672"/>
<rect x="833.46" y="225.2" width="4.65" height="1.5" fill="#66D9EF"/>
<rect x="838.11" y="225.2" width="0.93" height="1.5" fill="#F8F8F2"/>
<rect x="827.88" y="227.2" width="13.02" height="1.5" fill="#E6DB74"/>
<rect x="841.83" y="227.2" width="1.86" height="1.5" fill="#F92672"/>
<rect x="844.62" y="227.2" width="3.72" height="1.5" fill="#AE81FF"/>
<rect x="848.34" y="227.2" width="0.93" height="1.5" fill="#F8F8F2"/>
<rect x="827.88" y="229.2" width="17.67" height="1.5" fill="#E6DB74"/>
<rect x="846.48" y="229.2" width="1.86" height="1.5" fill="#F92672"/>
<rect x="849.27" y="229.2" width="3.72" height="1.5" fill="#AE81FF"/>
<rect x="852.99" y="229.2" width="0.93" height="1.5" fill="#F8F8F2"/>
<rect x="827.88" y="231.2" width="8.37" height="1.5" fill="#E6DB74"/>
<rect x="837.18" y="231.2" width="1.86" height="1.5" fill="#F92672"/>
<rect x="839.97" y="231.2" width="4.65" height="1.5" fill="#AE81FF"/>
<rect x="844.62" y="231.2" width="0.93" height="1.5" fill="#F8F8F2"/>
<rect x="827.88" y="233.2" width="13.02" height="1.5" fill="#E6DB74"/>
<rect x="841.83" y="233.2" width="1.86" height="1.5" fill="#F92672"/>
<rect x="844.62" y="233.2" width="4.65" height="1.5" fill="#66D9EF"/>
<rect x="849.27" y="233.2" width="0.93" height="1.5" fill="#F8F8F2"/>
<rect x="831.60" y="235.2" width="13.02" height="1.5" fill="#E6DB74"/>
<rect x="845.55" y="235.2" width="1.86" height="1.5" fill="#F92672"/>
<rect x="848.34" y="235.2" width="38.13" height="1.5" fill="#E6DB74"/>
<rect x="886.47" y="235.2" width="0.93" height="1.5" fill="#F8F8F2"/>
<rect x="831.60" y="237.2" width="11.16" height="1.5" fill="#E6DB74"/>
<rect x="845.55" y="237.2" width="1.86" height="1.5" fill="#F92672"/>
<rect x="848.34" y="237.2" width="36.27" height="1.5" fill="#E6DB74"/>
<rect x="884.61" y="237.2" width="0.93" height="1.5" fill="#F8F8F2"/>
<rect x="831.60" y="239.2" width="13.02" height="1.5" fill="#E6DB74"/>
<rect x="845.55" y="239.2" width="1.86" height="1.5" fill="#F92672"/>
<rect x="848.34" y="239.2" width="38.13" height="1.5" fill="#E6DB74"/>
<rect x="886.47" y="239.2" width="0.93" height="1.5" fill="#F8F8F2"/>
<rect x="831.60" y="241.2" width="13.02" height="1.5" fill="#E6DB74"/>
<rect x="845.55" y="241.2" width="1.86" height="1.5" fill="#F92672"/>
<rect x="848.34" y="241.2" width="38.13" height="1.5" fill="#E6DB74"/>
<rect x="886.47" y="241.2" width="0.93" height="1.5" fill="#F8F8F2"/>
<rect x="827.88" y="243.2" width="1.86" height="1.5" fill="#F8F8F2"/>
<rect x="824.16" y="245.2" width="1.86" height="1.5" fill="#F8F8F2"/>
<rect x="820.44" y="247.2" width="1.86" height="1.5" fill="#F8F8F2"/>
<rect x="820.44" y="251.2" width="10.23" height="1.5" fill="#E6DB74"/>
<rect x="831.60" y="251.2" width="1.86" height="1.5" fill="#F92672"/>
<rect x="834.39" y="251.2" width="4.65" height="1.5" fill="#66D9EF"/>
<rect x="839.04" y="251.2" width="0.93" height="1.5" fill="#F8F8F2"/>
<rect x="824.16" y="253.2" width="7.44" height="1.5" fill="#E6DB74"/>
<rect x="832.53" y="253.2" width="1.86" height="1.5" fill="#F92672"/>
<rect x="835.32" y="253.2" width="4.65" height="1.5" fill="#66D9EF"/>
<rect x="839.97" y="253.2" width="0.93" height="1.5" fill="#F8F8F2"/>
<rect x="827.88" y="255.2" width="5.58" height="1.5" fill="#E6DB74"/>
<rect x="846.48" y="255.2" width="1.86" height="1.5" fill="#F92672"/>
<rect x="849.27" y="255.2" width="2.79" height="1.5" fill="#F8F8F2"/>
<rect x="852.06" y="255.2" width="4.65" height="1.5" fill="#E6DB74"/>
<rect x="857.64" y="255.2" width="9.30" height="1.5" fill="#E6DB74"/>
<rect x="866.94" y="255.2" width="0.93" height="1.5" fill="#F8F8F2"/>
<rect x="868.80" y="255.2" width="8.37" height="1.5" fill="#E6DB74"/>
<rect x="878.10" y="255.2" width="6.51" height="1.5" fill="#E6DB74"/>
<rect x="885.54" y="255.2" width="4.65" height="1.5" fill="#E6DB74"/>
<rect x="890.19" y="255.2" width="0.93" height="1.5" fill="#F8F8F2"/>
<rect x="892.05" y="255.2" width="12.09" height="1.5" fill="#E6DB74"/>
<rect x="904.14" y="255.2" width="1.86" height="1.5" fill="#F8F8F2"/>
<rect x="827.88" y="257.2" width="10.23" height="1.5" fill="#E6DB74"/>
<rect x="846.48" y="257.2" width="1.86" height="1.5" fill="#F92672"/>
<rect x="849.27" y="257.2" width="2.79" height="1.5" fill="#F8F8F2"/>
<rect x="852.06" y="257.2" width="4.65" height="1.5" fill="#E6DB74"/>
<rect x="857.64" y="257.2" width="9.30" height="1.5" fill="#E6DB74"/>
<rect x="866.94" y="257.2" width="0.93" height="1.5" fill="#F8F8F2"/>
<rect x="868.80" y="257.2" width="8.37" height="1.5" fill="#E6DB74"/>
<rect x="878.10" y="257.2" width="3.72" height="1.5" fill="#E6DB74"/>
<rect x="882.75" y="257.2" width="4.65" height="1.5" fill="#E6DB74"/>
<rect x="887.40" y="257.2" width="0.93" height="1.5" fill="#F8F8F2"/>
<rect x="889.26" y="257.2" width="12.09" height="1.5" fill="#E6DB74"/>
<rect x="901.35" y="257.2" width="1.86" height="1.5" fill="#F8F8F2"/>
<rect x="827.88" y="259.2" width="13.95" height="1.5" fill="#E6DB74"/>
<rect x="846.48" y="259.2" width="1.86" height="1.5" fill="#F92672"/>
<rect x="849.27" y="259.2" width="2.79" height="1.5" fill="#F8F8F2"/>
<rect x="852.06" y="259.2" width="4.65" height="1.5" fill="#E6DB74"/>
<rect x="857.64" y="259.2" width="8.37" height="1.5" fill="#E6DB74"/>
<rect x="866.01" y="259.2" width="0.93" height="1.5" fill="#F8F8F2"/>
<rect x="867.87" y="259.2" width="8.37" height="1.5" fill="#E6DB74"/>
<rect x="877.17" y="259.2" width="7.44" height="1.5" fill="#E6DB74"/>
<rect x="885.54" y="259.2" width="4.65" height="1.5" fill="#E6DB74"/>
<rect x="890.19" y="259.2" width="0.93" height="1.5" fill="#F8F8F2"/>
<rect x="892.05" y="259.2" width="12.09" height="1.5" fill="#E6DB74"/>
<rect x="904.14" y="259.2" width="1.86" height="1.5" fill="#F8F8F2"/>
<rect x="827.88" y="261.2" width="13.02" height="1.5" fill="#E6DB74"/>
<rect x="846.48" y="261.2" width="1.86" height="1.5" fill="#F92672"/>
<rect x="849.27" y="261.2" width="2.79" height="1.5" fill="#F8F8F2"/>
<rect x="852.06" y="261.2" width="6.51" height="1.5" fill="#E6DB74"/>
<rect x="859.50" y="261.2" width="9.30" height="1.5" fill="#E6DB74"/>
<rect x="868.80" y="261.2" width="0.93" height="1.5" fill="#F8F8F2"/>
<rect x="870.66" y="261.2" width="12.09" height="1.5" fill="#E6DB74"/>
<rect x="882.75" y="261.2" width="1.86" height="1.5" fill="#F8F8F2"/>
<rect x="827.88" y="263.2" width="10.23" height="1.5" fill="#E6DB74"/>
<rect x="846.48" y="263.2" width="1.86" height="1.5" fill="#F92672"/>
<rect x="849.27" y="263.2" width="2.79" height="1.5" fill="#F8F8F2"/>
<rect x="852.06" y="263.2" width="3.72" height="1.5" fill="#E6DB74"/>
<rect x="856.71" y="263.2" width="9.30" height="1.5" fill="#E6DB74"/>
<rect x="866.01" y="263.2" width="0.93" height="1.5" fill="#F8F8F2"/>
<rect x="867.87" y="263.2" width="12.09" height="1.5" fill="#E6DB74"/>
<rect x="879.96" y="263.2" width="1.86" height="1.5" fill="#F8F8F2"/>
<rect x="827.88" y="265.2" width="12.09" height="1.5" fill="#E6DB74"/>
<rect x="846.48" y="265.2" width="1.86" height="1.5" fill="#F92672"/>
<rect x="849.27" y="265.2" width="2.79" height="1.5" fill="#F8F8F2"/>
<rect x="852.06" y="265.2" width="6.51" height="1.5" fill="#E6DB74"/>
<rect x="859.50" y="265.2" width="8.37" height="1.5" fill="#E6DB74"/>
<rect x="867.87" y="265.2" width="0.93" height="1.5" fill="#F8F8F2"/>
<rect x="869.73" y="265.2" width="12.09" height="1.5" fill="#E6DB74"/>
<rect x="881.82" y="265.2" width="1.86" height="1.5" fill="#F8F8F2"/>
<rect x="827.88" y="267.2" width="17.67" height="1.5" fill="#E6DB74"/>
<rect x="846.48" y="267.2" width="1.86" height="1.5" fill="#F92672"/>
<rect x="849.27" y="267.2" width="2.79" height="1.5" fill="#F8F8F2"/>
<rect x="852.06" y="267.2" width="6.51" height="1.5" fill="#E6DB74"/>
<rect x="859.50" y="267.2" width="9.30" height="1.5" fill="#E6DB74"/>
<rect x="868.80" y="267.2" width="0.93" height="1.5" fill="#F8F8F2"/>
<rect x="870.66" y="267.2" width="12.09" height="1.5" fill="#E6DB74"/>
<rect x="882.75" y="267.2" width="1.86" height="1.5" fill="#F8F8F2"/>
<rect x="827.88" y="269.2" width="10.23" height="1.5" fill="#E6DB74"/>
<rect x="846.48" y="269.2" width="1.86" height="1.5" fill="#F92672"/>
<rect x="849.27" y="269.2" width="2.79" height="1.5" fill="#F8F8F2"/>
<rect x="852.06" y="269.2" width="4.65" height="1.5" fill="#E6DB74"/>
<rect x="857.64" y="269.2" width="8.37" height="1.5" fill="#E6DB74"/>
<rect x="866.01" y="269.2" width="0.93" height="1.5" fill="#F8F8F2"/>
<rect x="867.87" y="269.2" width="12.09" height="1.5" fill="#E6DB74"/>
<rect x="879.96" y="269.2" width="1.86" height="1.5" fill="#F8F8F2"/>
<rect x="827.88" y="271.2" width="10.23" height="1.5" fill="#E6DB74"/>
<rect x="846.48" y="271.2" width="1.86" height="1.5" fill="#F92672"/>
<rect x="849.27" y="271.2" width="2.79" height="1.5" fill="#F8F8F2"/>
<rect x="852.06" y="271.2" width="4.65" height="1.5" fill="#E6DB74"/>
<rect x="857.64" y="271.2" width="8.37" height="1.5" fill="#E6DB74"/>
<rect x="866.01" y="271.2" width="0.93" height="1.5" fill="#F8F8F2"/>
<rect x="867.87" y="271.2" width="12.09" height="1.5" fill="#E6DB74"/>
<rect x="879.96" y="271.2" width="1.86" height="1.5" fill="#F8F8F2"/>
<rect x="827.88" y="273.2" width="12.09" height="1.5" fill="#E6DB74"/>
<rect x="846.48" y="273.2" width="1.86" height="1.5" fill="#F92672"/>
<rect x="849.27" y="273.2" width="2.79" height="1.5" fill="#F8F8F2"/>
<rect x="852.06" y="273.2" width="6.51" height="1.5" fill="#E6DB74"/>
<rect x="859.50" y="273.2" width="8.37" height="1.5" fill="#E6DB74"/>
<rect x="867.87" y="273.2" width="0.93" height="1.5" fill="#F8F8F2"/>
<rect x="869.73" y="273.2" width="12.09" height="1.5" fill="#E6DB74"/>
<rect x="881.82" y="273.2" width="1.86" height="1.5" fill="#F8F8F2"/>
<rect x="827.88" y="275.2" width="13.02" height="1.5" fill="#E6DB74"/>
<rect x="846.48" y="275.2" width="1.86" height="1.5" fill="#F92672"/>
<rect x="849.27" y="275.2" width="2.79" height="1.5" fill="#F8F8F2"/>
<rect x="852.06" y="275.2" width="3.72" height="1.5" fill="#E6DB74"/>
<rect x="856.71" y="275.2" width="2.79" height="1.5" fill="#E6DB74"/>
<rect x="860.43" y="275.2" width="8.37" height="1.5" fill="#E6DB74"/>
<rect x="868.80" y="275.2" width="0.93" height="1.5" fill="#F8F8F2"/>
<rect x="870.66" y="275.2" width="12.09" height="1.5" fill="#E6DB74"/>
<rect x="882.75" y="275.2" width="1.86" height="1.5" fill="#F8F8F2"/>
<rect x="827.88" y="277.2" width="13.95" height="1.5" fill="#E6DB74"/>
<rect x="846.48" y="277.2" width="1.86" height="1.5" fill="#F92672"/>
<rect x="849.27" y="277.2" width="2.79" height="1.5" fill="#F8F8F2"/>
<rect x="852.06" y="277.2" width="3.72" height="1.5" fill="#E6DB74"/>
<rect x="856.71" y="277.2" width="7.44" height="1.5" fill="#E6DB74"/>
<rect x="865.08" y="277.2" width="4.65" height="1.5" fill="#E6DB74"/>
<rect x="869.73" y="277.2" width="0.93" height="1.5" fill="#F8F8F2"/>
<rect x="871.59" y="277.2" width="12.09" height="1.5" fill="#E6DB74"/>
<rect x="883.68" y="277.2" width="1.86" height="1.5" fill="#F8F8F2"/>
<rect x="824.16" y="279.2" width="1.86" height="1.5" fill="#F8F8F2"/>
<rect x="824.16" y="281.2" width="5.58" height="1.5" fill="#E6DB74"/>
<rect x="830.67" y="281.2" width="1.86" height="1.5" fill="#F92672"/>
<rect x="833.46" y="281.2" width="4.65" height="1.5" fill="#66D9EF"/>
<rect x="838.11" y="281.2" width="0.93" height="1.5" fill="#F8F8F2"/>
<rect x="827.88" y="283.2" width="13.02" height="1.5" fill="#E6DB74"/>
<rect x="841.83" y="283.2" width="1.86" height="1.5" fill="#F92672"/>
<rect x="844.62" y="283.2" width="3.72" height="1.5" fill="#AE81FF"/>
<rect x="848.34" y="283.2" width="0.93" height="1.5" fill="#F8F8F2"/>
<rect x="827.88" y="285.2" width="17.67" height="1.5" fill="#E6DB74"/>
<rect x="846.48" y="285.2" width="1.86" height="1.5" fill="#F92672"/>
<rect x="849.27" y="285.2" width="3.72" height="1.5" fill="#AE81FF"/>
<rect x="852.99" y="285.2" width="0.93" height="1.5" fill="#F8F8F2"/>
<rect x="827.88" y="287.2" width="8.37" height="1.5" fill="#E6DB74"/>
<rect x="837.18" y="287.2" width="1.86" height="1.5" fill="#F92672"/>
<rect x="839.97" y="287.2" width="4.65" height="1.5" fill="#AE81FF"/>
<rect x="844.62" y="287.2" width="0.93" height="1.5" fill="#F8F8F2"/>
<rect x="827.88" y="289.2" width="13.02" height="1.5" fill="#E6DB74"/>
<rect x="841.83" y="289.2" width="1.86" height="1.5" fill="#F92672"/>
<rect x="844.62" y="289.2" width="4.65" height="1.5" fill="#66D9EF"/>
<rect x="849.27" y="289.2" width="0.93" height="1.5" fill="#F8F8F2"/>
<rect x="831.60" y="291.2" width="13.02" height="1.5" fill="#E6DB74"/>
<rect x="845.55" y="291.2" width="1.86" height="1.5" fill="#F92672"/>
<rect x="848.34" y="291.2" width="38.13" height="1.5" fill="#E6DB74"/>
<rect x="886.47" y="291.2" width="0.93" height="1.5" fill="#F8F8F2"/>
<rect x="831.60" y="293.2" width="11.16" height="1.5" fill="#E6DB74"/>
<rect x="845.55" y="293.2" width="1.86" height="1.5" fill="#F92672"/>
<rect x="848.34" y="293.2" width="36.27" height="1.5" fill="#E6DB74"/>
<rect x="884.61" y="293.2" width="0.93" height="1.5" fill="#F8F8F2"/>
<rect x="831.60" y="295.2" width="13.02" height="1.5" fill="#E6DB74"/>
<rect x="845.55" y="295.2" width="1.86" height="1.5" fill="#F92672"/>
<rect x="848.34" y="295.2" width="38.13" height="1.5" fill="#E6DB74"/>
<rect x="886.47" y="295.2" width="0.93" height="1.5" fill="#F8F8F2"/>
<rect x="831.60" y="297.2" width="13.02" height="1.5" fill="#E6DB74"/>
<rect x="845.55" y="297.2" width="1.86" height="1.5" fill="#F92672"/>
<rect x="848.34" y="297.2" width="38.13" height="1.5" fill="#E6DB74"/>
<rect x="886.47" y="297.2" width="0.93" height="1.5" fill="#F8F8F2"/>
<rect x="827.88" y="299.2" width="1.86" height="1.5" fill="#F8F8F2"/>
<rect x="824.16" y="301.2" width="1.86" height="1.5" fill="#F8F8F2"/>
<rect x="820.44" y="303.2" width="1.86" height="1.5" fill="#F8F8F2"/>
<rect x="816.72" y="305.2" width="1.86" height="1.5" fill="#F8F8F2"/>
<rect x="816.72" y="309.2" width="10.23" height="1.5" fill="#E6DB74"/>
<rect x="827.88" y="309.2" width="1.86" height="1.5" fill="#F92672"/>
<rect x="830.67" y="309.2" width="4.65" height="1.5" fill="#66D9EF"/>
<rect x="835.32" y="309.2" width="0.93" height="1.5" fill="#F8F8F2"/>
<rect x="820.44" y="311.2" width="10.23" height="1.5" fill="#E6DB74"/>
<rect x="831.60" y="311.2" width="1.86" height="1.5" fill="#F92672"/>
<rect x="834.39" y="311.2" width="4.65" height="1.5" fill="#66D9EF"/>
<rect x="839.04" y="311.2" width="0.93" height="1.5" fill="#F8F8F2"/>
<rect x="824.16" y="313.2" width="6.51" height="1.5" fill="#E6DB74"/>
<rect x="834.39" y="313.2" width="1.86" height="1.5" fill="#F92672"/>
<rect x="837.18" y="313.2" width="2.79" height="1.5" fill="#F8F8F2"/>
<rect x="839.97" y="313.2" width="7.44" height="1.5" fill="#E6DB74"/>
<rect x="848.34" y="313.2" width="2.79" height="1.5" fill="#E6DB74"/>
<rect x="852.06" y="313.2" width="4.65" height="1.5" fill="#E6DB74"/>
<rect x="856.71" y="313.2" width="0.93" height="1.5" fill="#F8F8F2"/>
<rect x="858.57" y="313.2" width="11.16" height="1.5" fill="#E6DB74"/>
<rect x="870.66" y="313.2" width="4.65" height="1.5" fill="#E6DB74"/>
<rect x="876.24" y="313.2" width="5.58" height="1.5" fill="#E6DB74"/>
<rect x="881.82" y="313.2" width="0.93" height="1.5" fill="#F8F8F2"/>
<rect x="883.68" y="313.2" width="12.09" height="1.5" fill="#E6DB74"/>
<rect x="895.77" y="313.2" width="1.86" height="1.5" fill="#F8F8F2"/>
<rect x="824.16" y="315.2" width="7.44" height="1.5" fill="#E6DB74"/>
<rect x="834.39" y="315.2" width="1.86" height="1.5" fill="#F92672"/>
<rect x="837.18" y="315.2" width="10.23" height="1.5" fill="#E6DB74"/>
<rect x="847.41" y="315.2" width="0.93" height="1.5" fill="#F8F8F2"/>
<rect x="824.16" y="317.2" width="3.72" height="1.5" fill="#E6DB74"/>
<rect x="834.39" y="317.2" width="1.86" height="1.5" fill="#F92672"/>
<rect x="837.18" y="317.2" width="4.65" height="1.5" fill="#66D9EF"/>
<rect x="841.83" y="317.2" width="0.93" height="1.5" fill="#F8F8F2"/>
<rect x="842.76" y="317.2" width="10.23" height="1.5" fill="#E6DB74"/>
<rect x="852.99" y="317.2" width="0.93" height="1.5" fill="#F8F8F2"/>
<rect x="854.85" y="317.2" width="13.02" height="1.5" fill="#E6DB74"/>
<rect x="867.87" y="317.2" width="1.86" height="1.5" fill="#F8F8F2"/>
<rect x="820.44" y="319.2" width="1.86" height="1.5" fill="#F8F8F2"/>
<rect x="820.44" y="321.2" width="12.09" height="1.5" fill="#E6DB74"/>
<rect x="833.46" y="321.2" width="1.86" height="1.5" fill="#F92672"/>
<rect x="836.25" y="321.2" width="4.65" height="1.5" fill="#66D9EF"/>
<rect x="840.90" y="321.2" width="0.93" height="1.5" fill="#F8F8F2"/>
<rect x="824.16" y="323.2" width="6.51" height="1.5" fill="#E6DB74"/>
<rect x="834.39" y="323.2" width="1.86" height="1.5" fill="#F92672"/>
<rect x="837.18" y="323.2" width="2.79" height="1.5" fill="#F8F8F2"/>
<rect x="839.97" y="323.2" width="6.51" height="1.5" fill="#E6DB74"/>
<rect x="847.41" y="323.2" width="1.86" height="1.5" fill="#E6DB74"/>
<rect x="850.20" y="323.2" width="4.65" height="1.5" fill="#E6DB74"/>
<rect x="854.85" y="323.2" width="0.93" height="1.5" fill="#F8F8F2"/>
<rect x="856.71" y="323.2" width="11.16" height="1.5" fill="#E6DB74"/>
<rect x="868.80" y="323.2" width="4.65" height="1.5" fill="#E6DB74"/>
<rect x="874.38" y="323.2" width="5.58" height="1.5" fill="#E6DB74"/>
<rect x="879.96" y="323.2" width="0.93" height="1.5" fill="#F8F8F2"/>
<rect x="881.82" y="323.2" width="12.09" height="1.5" fill="#E6DB74"/>
<rect x="893.91" y="323.2" width="1.86" height="1.5" fill="#F8F8F2"/>
<rect x="824.16" y="325.2" width="7.44" height="1.5" fill="#E6DB74"/>
<rect x="834.39" y="325.2" width="1.86" height="1.5" fill="#F92672"/>
<rect x="837.18" y="325.2" width="12.09" height="1.5" fill="#E6DB74"/>
<rect x="849.27" y="325.2" width="0.93" height="1.5" fill="#F8F8F2"/>
<rect x="824.16" y="327.2" width="3.72" height="1.5" fill="#E6DB74"/>
<rect x="834.39" y="327.2" width="1.86" height="1.5" fill="#F92672"/>
<rect x="837.18" y="327.2" width="4.65" height="1.5" fill="#66D9EF"/>
<rect x="841.83" y="327.2" width="0.93" height="1.5" fill="#F8F8F2"/>
<rect x="842.76" y="327.2" width="12.09" height="1.5" fill="#E6DB74"/>
<rect x="854.85" y="327.2" width="0.93" height="1.5" fill="#F8F8F2"/>
<rect x="856.71" y="327.2" width="15.81" height="1.5" fill="#E6DB74"/>
<rect x="872.52" y="327.2" width="1.86" height="1.5" fill="#F8F8F2"/>
<rect x="820.44" y="329.2" width="1.86" height="1.5" fill="#F8F8F2"/>
<rect x="816.72" y="331.2" width="1.86" height="1.5" fill="#F8F8F2"/>
<rect x="816.72" y="335.2" width="20.46" height="1.5" fill="#E6DB74"/>
<rect x="838.11" y="335.2" width="1.86" height="1.5" fill="#F92672"/>
<rect x="840.90" y="335.2" width="4.65" height="1.5" fill="#66D9EF"/>
<rect x="845.55" y="335.2" width="0.93" height="1.5" fill="#F8F8F2"/>
<rect x="820.44" y="337.2" width="7.44" height="1.5" fill="#E6DB74"/>
<rect x="828.81" y="337.2" width="1.86" height="1.5" fill="#F92672"/>
<rect x="831.60" y="337.2" width="4.65" height="1.5" fill="#66D9EF"/>
<rect x="836.25" y="337.2" width="0.93" height="1.5" fill="#F8F8F2"/>
<rect x="824.16" y="339.2" width="6.51" height="1.5" fill="#E6DB74"/>
<rect x="839.04" y="339.2" width="1.86" height="1.5" fill="#F92672"/>
<rect x="841.83" y="339.2" width="2.79" height="1.5" fill="#F8F8F2"/>
<rect x="844.62" y="339.2" width="4.65" height="1.5" fill="#E6DB74"/>
<rect x="850.20" y="339.2" width="5.58" height="1.5" fill="#E6DB74"/>
<rect x="855.78" y="339.2" width="0.93" height="1.5" fill="#F8F8F2"/>
<rect x="857.64" y="339.2" width="8.37" height="1.5" fill="#E6DB74"/>
<rect x="866.94" y="339.2" width="4.65" height="1.5" fill="#E6DB74"/>
<rect x="872.52" y="339.2" width="6.51" height="1.5" fill="#E6DB74"/>
<rect x="879.96" y="339.2" width="5.58" height="1.5" fill="#E6DB74"/>
<rect x="885.54" y="339.2" width="0.93" height="1.5" fill="#F8F8F2"/>
<rect x="887.40" y="339.2" width="12.09" height="1.5" fill="#E6DB74"/>
<rect x="899.49" y="339.2" width="1.86" height="1.5" fill="#F8F8F2"/>
<rect x="824.16" y="341.2" width="13.02" height="1.5" fill="#E6DB74"/>
<rect x="839.04" y="341.2" width="1.86" height="1.5" fill="#F92672"/>
<rect x="841.83" y="341.2" width="2.79" height="1.5" fill="#F8F8F2"/>
<rect x="844.62" y="341.2" width="3.72" height="1.5" fill="#E6DB74"/>
<rect x="849.27" y="341.2" width="3.72" height="1.5" fill="#E6DB74"/>
<rect x="853.92" y="341.2" width="5.58" height="1.5" fill="#E6DB74"/>
<rect x="859.50" y="341.2" width="0.93" height="1.5" fill="#F8F8F2"/>
<rect x="861.36" y="341.2" width="8.37" height="1.5" fill="#E6DB74"/>
<rect x="870.66" y="341.2" width="4.65" height="1.5" fill="#E6DB74"/>
<rect x="876.24" y="341.2" width="6.51" height="1.5" fill="#E6DB74"/>
<rect x="883.68" y="341.2" width="4.65" height="1.5" fill="#E6DB74"/>
<rect x="888.33" y="341.2" width="0.93" height="1.5" fill="#F8F8F2"/>
<rect x="890.19" y="341.2" width="12.09" height="1.5" fill="#E6DB74"/>
<rect x="902.28" y="341.2" width="1.86" height="1.5" fill="#F8F8F2"/>
<rect x="824.16" y="343.2" width="15.81" height="1.5" fill="#E6DB74"/>
<rect x="840.90" y="343.2" width="1.86" height="1.5" fill="#F92672"/>
<rect x="843.69" y="343.2" width="2.79" height="1.5" fill="#F8F8F2"/>
<rect x="846.48" y="343.2" width="6.51" height="1.5" fill="#E6DB74"/>
<rect x="853.92" y="343.2" width="3.72" height="1.5" fill="#E6DB74"/>
<rect x="858.57" y="343.2" width="5.58" height="1.5" fill="#E6DB74"/>
<rect x="864.15" y="343.2" width="0.93" height="1.5" fill="#F8F8F2"/>
<rect x="866.01" y="343.2" width="8.37" height="1.5" fill="#E6DB74"/>
<rect x="875.31" y="343.2" width="4.65" height="1.5" fill="#E6DB74"/>
<rect x="880.89" y="343.2" width="7.44" height="1.5" fill="#E6DB74"/>
<rect x="888.33" y="343.2" width="0.93" height="1.5" fill="#F8F8F2"/>
<rect x="890.19" y="343.2" width="12.09" height="1.5" fill="#E6DB74"/>
<rect x="902.28" y="343.2" width="1.86" height="1.5" fill="#F8F8F2"/>
<rect x="820.44" y="345.2" width="1.86" height="1.5" fill="#F8F8F2"/>
<rect x="820.44" y="347.2" width="8.37" height="1.5" fill="#E6DB74"/>
<rect x="829.74" y="347.2" width="1.86" height="1.5" fill="#F92672"/>
<rect x="832.53" y="347.2" width="5.58" height="1.5" fill="#E6DB74"/>
<rect x="838.11" y="347.2" width="0.93" height="1.5" fill="#F8F8F2"/>
<rect x="820.44" y="349.2" width="9.30" height="1.5" fill="#E6DB74"/>
<rect x="830.67" y="349.2" width="1.86" height="1.5" fill="#F92672"/>
<rect x="833.46" y="349.2" width="4.65" height="1.5" fill="#E6DB74"/>
<rect x="838.11" y="349.2" width="0.93" height="1.5" fill="#F8F8F2"/>
<rect x="816.72" y="351.2" width="1.86" height="1.5" fill="#F8F8F2"/>
<rect x="813.00" y="353.2" width="1.86" height="1.5" fill="#F8F8F2"/>
  </svg>
  <svg class="abs" style="left:495px;top:810px" width="160" height="42" viewBox="0 0 160 42">
    <defs><filter id="ds" x="-10%" y="-30%" width="120%" height="170%"><feGaussianBlur in="SourceAlpha" stdDeviation="1.2"/><feOffset dx="1.5" dy="1.5"/><feComponentTransfer><feFuncA type="linear" slope="0.85"/></feComponentTransfer><feMerge><feMergeNode/><feMergeNode in="SourceGraphic"/></feMerge></filter></defs>
    <g filter="url(#ds)" fill="#f00" stroke="#f00" stroke-linejoin="round" stroke-linecap="round">
      <path d="M9 20.3 L25.3 10.5 L24.5 17.7 L138.7 13.8 A4.55 4.55 0 0 1 139 22.9 L24.6 23.7 L25.3 30 Z" stroke-width="1.2"/>
    </g>
  </svg>
  <div id="track" class="abs"></div>
  <div id="thumb" class="abs"></div>
  <div id="divider" class="abs"></div>
  <div id="pane2" class="abs"></div>
  <div id="status" class="abs"><span style="left:4px;letter-spacing:-0.15px">Line 28, Column 35</span><span style="left:769px;letter-spacing:-0.35px">Tab Size: 4</span><span style="left:894px;transform:scaleX(0.85);transform-origin:0 0">PHP</span></div>
  <div class="abs bd" style="left:0;top:0;width:960px;height:1px"></div>
  <div class="abs bd" style="left:0;top:0;width:1px;height:1050px"></div>
  <div class="abs bd" style="left:959px;top:0;width:1px;height:1050px"></div>
  <div class="abs bd" style="left:0;top:1049px;width:960px;height:1px"></div>
</div>
</body>
</html>
